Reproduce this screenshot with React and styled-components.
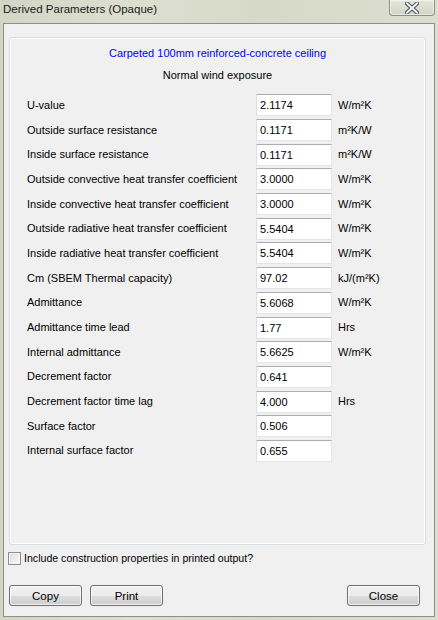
import { Fragment } from "react";
import styled, { createGlobalStyle } from "styled-components";

const GlobalStyle = createGlobalStyle`
  html, body {
    margin: 0;
    padding: 0;
    background: #d8dbca;
  }
  * {
    box-sizing: border-box;
  }
`;

const rows = [
  { label: "U-value", value: "2.1174", unit: "W/m²K" },
  { label: "Outside surface resistance", value: "0.1171", unit: "m²K/W" },
  { label: "Inside surface resistance", value: "0.1171", unit: "m²K/W" },
  { label: "Outside convective heat transfer coefficient", value: "3.0000", unit: "W/m²K" },
  { label: "Inside convective heat transfer coefficient", value: "3.0000", unit: "W/m²K" },
  { label: "Outside radiative heat transfer coefficient", value: "5.5404", unit: "W/m²K" },
  { label: "Inside radiative heat transfer coefficient", value: "5.5404", unit: "W/m²K" },
  { label: "Cm (SBEM Thermal capacity)", value: "97.02", unit: "kJ/(m²K)" },
  { label: "Admittance", value: "5.6068", unit: "W/m²K" },
  { label: "Admittance time lead", value: "1.77", unit: "Hrs" },
  { label: "Internal admittance", value: "5.6625", unit: "W/m²K" },
  { label: "Decrement factor", value: "0.641", unit: "" },
  { label: "Decrement factor time lag", value: "4.000", unit: "Hrs" },
  { label: "Surface factor", value: "0.506", unit: "" },
  { label: "Internal surface factor", value: "0.655", unit: "" },
];

const Window = styled.div`
  width: 438px;
  height: 620px;
  display: flex;
  flex-direction: column;
  background: linear-gradient(90deg, #d3d6c4 0%, #dde0d0 30%, #d6d9c8 60%, #dcdfcf 100%);
  font-family: "Liberation Sans", Arial, sans-serif;
  font-size: 11px;
  color: #000;
`;

const TitleBar = styled.div`
  height: 23px;
  display: flex;
  align-items: flex-start;
  padding-left: 3px;
`;

const Title = styled.span`
  margin-top: 3px;
  font-size: 11.5px;
  color: #1a1a1a;
`;

const CloseBox = styled.div`
  margin-left: auto;
  margin-right: 3px;
  width: 46px;
  height: 16px;
  border: 1px solid #8b8e82;
  border-top: none;
  border-radius: 0 0 4px 4px;
  background: linear-gradient(#e4e6da, #d2d5c6);
  box-shadow: inset 0 0 0 1px rgba(255, 255, 255, 0.55);
  display: flex;
  align-items: center;
  justify-content: center;
`;

const Client = styled.div`
  flex: 1;
  margin: 0 3px 3px 3px;
  border: 1px solid #8c8f86;
  background: #f0f0f0;
  display: flex;
  flex-direction: column;
  padding: 13px 8px 0 5px;
`;

const GroupBox = styled.div`
  height: 508px;
  border: 1px solid #d5dfe5;
  border-radius: 3px;
  box-shadow: inset 0 0 0 1px #fff;
  padding: 9px 0 0 17px;
  display: flex;
  flex-direction: column;
`;

const Heading = styled.div`
  text-align: center;
  margin-left: -17px;
  line-height: 13px;
  color: ${(p) => (p.$accent ? "#0000ff" : "#000")};
  margin-bottom: ${(p) => (p.$accent ? "9px" : "0")};
`;

const Grid = styled.div`
  margin-top: 11px;
  display: grid;
  grid-template-columns: 229px 76px auto;
  grid-auto-rows: 24.7px;
  align-items: center;
`;

const Label = styled.span`
  line-height: 13px;
`;

const Field = styled.div`
  height: 22px;
  background: #fff;
  border: 1px solid #e2e6ea;
  border-top-color: #abadb3;
  border-left-color: #dbdfe6;
  border-radius: 1px;
  padding: 4px 0 0 3px;
  line-height: 13px;
`;

const Unit = styled.span`
  padding-left: 6px;
  line-height: 13px;
`;

const CheckRow = styled.label`
  display: flex;
  align-items: center;
  gap: 3px;
  margin: 6px 0 0 -1px;
  height: 14px;
  font-size: 10.6px;
`;

const CheckBox = styled.span`
  width: 13px;
  height: 13px;
  border: 1px solid #8f8f8f;
  background: linear-gradient(135deg, #dcdcdc, #fdfdfd);
  box-shadow: inset 0 0 0 1px #f4f4f4;
`;

const ButtonBar = styled.div`
  display: flex;
  gap: 8px;
  margin: 20px 0 0 0;
  padding-right: 6px;
`;

const Button = styled.div`
  width: 73px;
  height: 21px;
  border: 1px solid #707070;
  border-radius: 3px;
  background: linear-gradient(#f2f2f2 0%, #ebebeb 50%, #dddddd 50%, #cfcfcf 100%);
  box-shadow: inset 0 0 0 1px rgba(255, 255, 255, 0.7);
  display: flex;
  align-items: center;
  justify-content: center;
  font-size: 11.5px;
  margin-left: ${(p) => (p.$right ? "auto" : "0")};
`;

const CloseIcon = () => (
  <svg width="14" height="12" viewBox="0 0 14 12">
    <path d="M2 1.5 L12 10.5 M12 1.5 L2 10.5" stroke="#4c4f5a" strokeWidth="4" strokeLinecap="square" />
    <path d="M2 1.5 L12 10.5 M12 1.5 L2 10.5" stroke="#f4f5f8" strokeWidth="2" strokeLinecap="square" />
  </svg>
);

const App = () => (
  <Window>
    <GlobalStyle />
    <TitleBar>
      <Title>Derived Parameters (Opaque)</Title>
      <CloseBox>
        <CloseIcon />
      </CloseBox>
    </TitleBar>
    <Client>
      <GroupBox>
        <Heading $accent>Carpeted 100mm reinforced-concrete ceiling</Heading>
        <Heading>Normal wind exposure</Heading>
        <Grid>
          {rows.map((r) => (
            <Fragment key={r.label}>
              <Label>{r.label}</Label>
              <Field>{r.value}</Field>
              <Unit>{r.unit}</Unit>
            </Fragment>
          ))}
        </Grid>
      </GroupBox>
      <CheckRow>
        <CheckBox />
        Include construction properties in printed output?
      </CheckRow>
      <ButtonBar>
        <Button>Copy</Button>
        <Button>Print</Button>
        <Button $right>Close</Button>
      </ButtonBar>
    </Client>
  </Window>
);

export default App;
